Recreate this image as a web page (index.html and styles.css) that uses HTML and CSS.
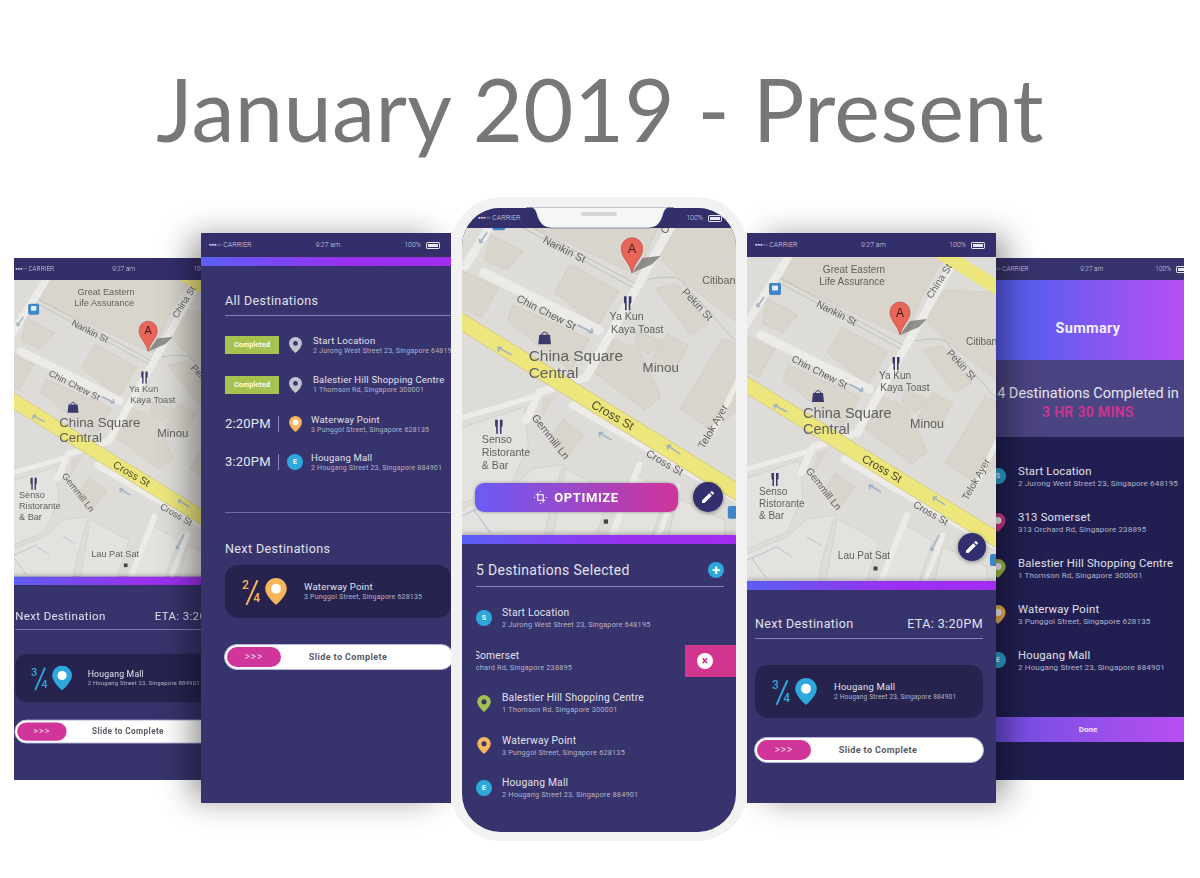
FILE: index.html
```html
<!DOCTYPE html>
<html lang="en">
<head>
  <meta charset="UTF-8">
  <meta name="viewport" content="width=device-width, initial-scale=1.0">
  <title>January 2019 - Present</title>
  <link rel="stylesheet" href="styles.css">
</head>
<body>
  <svg class="defs" width="0" height="0" aria-hidden="true">
    <defs>
      <symbol id="pin" viewBox="0 0 24 30">
        <path fill="currentColor" fill-rule="evenodd" d="M12 0a12 12 0 0 1 12 12c0 8-12 18-12 18S0 20 0 12A12 12 0 0 1 12 0zm0 7.5a4.5 4.5 0 1 0 0 9 4.5 4.5 0 0 0 0-9z"/>
      </symbol>
      <symbol id="pin-white" viewBox="0 0 24 30">
        <path fill="currentColor" d="M12 0a12 12 0 0 1 12 12c0 8-12 18-12 18S0 20 0 12A12 12 0 0 1 12 0z"/>
        <circle cx="12" cy="12" r="5.5" fill="#fff"/>
      </symbol>
      <symbol id="pencil" viewBox="0 0 24 24">
        <path fill="#fff" d="M3 17.2V21h3.800L17.800 10 14 6.200zM20.700 7a1 1 0 0 0 0-1.400l-2.300-2.300a1 1 0 0 0-1.400 0l-1.800 1.800L19 8.800z"/>
      </symbol>
      <g id="fork">
        <path d="M-2.500 0v5q0 1.500 1 2v6h1.500V0M2 0v13h1.500V7q1-.5 1-2V0" fill="#3a3968"/>
      </g>
      <g id="map-art">
        <rect x="-30" y="-10" width="320" height="350" fill="#dddcd9"/>
        <!-- lighter lots in the south -->
        <g fill="#e3e2df" stroke="#cbc9c5" stroke-width=".6">
          <polygon points="-20,228 52,204 56,240 40,275 -20,300"/>
          <polygon points="-20,305 40,280 60,262 88,258 76,300 70,330 -20,330"/>
          <polygon points="90,262 132,284 118,330 78,330"/>
          <polygon points="158,268 186,284 170,330 132,330 146,300"/>
          <polygon points="196,290 240,310 240,330 186,330"/>
        </g>
        <path d="M-20 312L30 290 45 300M4 300l16 22M60 280l14 8" fill="none" stroke="#b8c2d0" stroke-width="1"/>
        <!-- buildings -->
        <g fill="#d9d5cc" stroke="#cbc6bd" stroke-width=".5">
          <polygon points="45,1 197,1 177,36 158,80 35,23"/>
          <polygon points="20,41 51,58 36,75 15,66"/>
          <polygon points="-20,70 28,92 12,120 -20,105"/>
          <polygon points="95,70 141,95 121,128 80,96"/>
          <polygon points="41,108 113,140 95,170 36,123"/>
          <polygon points="135,140 160,150 172,175 180,195 165,207 115,170"/>
          <polygon points="158,133 183,143 168,155 155,145"/>
          <polygon points="186,135 206,146 191,173 171,160"/>
          <polygon points="238,140 270,150 270,193 228,226 198,206"/>
          <polygon points="175,93 195,88 225,126 208,136"/>
          <polygon points="185,33 280,36 280,146 201,86 181,66"/>
          <polygon points="88,216 108,230 91,253 75,236"/>
        </g>
        <!-- streets -->
        <g fill="none" stroke="#ecebe8" stroke-linecap="round">
          <path stroke-width="8" d="M212 -5L110 176"/>
          <path stroke-width="7" d="M110 176L66 190 54 216"/>
          <path stroke-width="8" d="M44 -4L-4 72"/>
          <path stroke-width="9" d="M14 78L122 132"/>
          <path stroke-width="8" d="M98 202L262 296"/>
          <path stroke-width="5" d="M-20 218L62 194"/>
          <path stroke-width="6" d="M160 258L132 330"/>
          <path stroke-width="5" d="M196 278L176 330"/>
          <path stroke-width="5" d="M230 226L254 176"/>
        </g>
        <polygon points="70,196 82,192 66,218" fill="#d9d5cc"/>
        <path d="M33 21L156 88M31 25L154 92M168 84Q190 80 198 84L250 142" fill="none" stroke="#b9b6ae" stroke-width=".7"/>
        <path d="M-10 122L262 290" fill="none" stroke="#d4d08c" stroke-width="16"/>
        <path d="M-10 122L262 290" fill="none" stroke="#ece67c" stroke-width="14"/>
        <path d="M188 -8L262 38" fill="none" stroke="#ece67c" stroke-width="14"/>
        <!-- one way arrows -->
        <g fill="none" stroke="#9fb2c4" stroke-width="1.500">
          <path d="M27 148L40 155M27 148l4 0M27 148l1 4"/>
          <path d="M186 240L198 248M186 240l4 0M186 240l1 4"/>
          <path d="M122 228L134 235M122 228l4 0M122 228l1 4"/>
          <path d="M102 127L116 134M116 134l-4 0M116 134l-1-4"/>
          <path d="M17 40L10 50M10 50l0-4M10 50l3-1"/>
          <path d="M192 278L184 294M184 294l0-4M184 294l3-2"/>
        </g>
        <!-- labels -->
        <g class="map-label">
          <text x="107" y="16" text-anchor="middle">Great Eastern</text>
          <text x="105" y="28" text-anchor="middle">Life Assurance</text>
          <text x="88" y="59" text-anchor="middle" transform="rotate(27 88 59)">Nankin St</text>
          <text x="71" y="118" text-anchor="middle" transform="rotate(27 71 118)">Chin Chew St</text>
          <text x="195" y="26" text-anchor="middle" transform="rotate(-58 195 26)">China St</text>
          <text x="219" y="88">Citibank</text>
          <text x="212" y="110" text-anchor="middle" transform="rotate(47 212 110)">Pekin St</text>
          <text x="148" y="122" text-anchor="middle">Ya Kun</text>
          <text x="158" y="134" text-anchor="middle">Kaya Toast</text>
          <text x="232" y="224" text-anchor="middle" transform="rotate(-60 232 224)">Telok Ayer</text>
          <text x="133" y="215" text-anchor="middle" transform="rotate(30 133 215)" class="map-road">Cross St</text>
          <text x="182" y="259" text-anchor="middle" transform="rotate(30 182 259)">Cross St</text>
          <text x="74" y="234" text-anchor="middle" transform="rotate(52 74 234)">Gemmill Ln</text>
          <text x="12" y="238">Senso</text>
          <text x="12" y="250">Ristorante</text>
          <text x="12" y="262">&amp; Bar</text>
          <text x="117" y="302" text-anchor="middle">Lau Pat Sat</text>
          <text x="56" y="161" class="map-big">China Square</text>
          <text x="56" y="177" class="map-big">Central</text>
          <text x="180" y="171" text-anchor="middle" class="map-mid">Minou</text>
        </g>
        <!-- poi icons -->
        <rect x="22" y="26" width="12" height="12" rx="2" fill="#3f86c6"/>
        <rect x="25" y="28.500" width="6" height="5" rx="1" fill="#e4ecf4"/>
        <rect x="243" y="297" width="12" height="12" rx="2" fill="#3f86c6"/>
        <rect x="126.500" y="309.500" width="4" height="4" fill="#444"/>
        <use href="#fork" x="148" y="100"/>
        <use href="#fork" x="27" y="216"/>
        <path d="M66 136h10l1 9H65z" fill="#3b3a6a"/>
        <path d="M68 136q3-5 6 0" fill="none" stroke="#3b3a6a"/>
        <!-- marker -->
        <polygon points="153,78 163,64 180,62 172,70" fill="#6b6b66" opacity=".7"/>
        <path d="M153 78c-2-10-10-14-10-23a10 10 0 1 1 20 0c0 9-8 13-10 23z" fill="#e8655a" stroke="#b5423a" stroke-width=".6"/>
        <text x="153" y="59.500" text-anchor="middle" class="map-marker">A</text>
      </g>
    </defs>
  </svg>

  <header class="title-wrap">
    <h1 class="title">January 2019 - Present</h1>
  </header>

  <main class="stage">
    <!-- far left, same screen as the right navigation one but smaller -->
    <section class="window window-left">
      <div class="shrunk">
        <div class="screen">
          <div class="status"><span class="carrier"><i class="dots">●●●○○</i> CARRIER</span><span>9:27 am</span><span class="batt">100% <i class="battery"></i></span></div>
          <svg class="map map-nav" viewBox="0 0 249 324"><use href="#map-art"/></svg>
          <div class="bar"></div>
          <div class="body body-nav">
            <div class="section-title"><span>Next Destination</span><span>ETA: 3:20PM</span></div>
            <div class="card">
              <div class="frac frac-blue"><b>3</b><b class="denom">4</b></div>
              <svg class="card-pin blue"><use href="#pin-white"/></svg>
              <div class="place"><div class="name">Hougang Mall</div><div class="addr">2 Hougang Street 23, Singapore 884901</div></div>
            </div>
            <div class="slider"><span class="thumb">&gt;&gt;&gt;</span><span class="slider-text">Slide to Complete</span></div>
          </div>
        </div>
      </div>
    </section>

    <section class="window window-list">
      <div class="screen">
        <div class="status"><span class="carrier"><i class="dots">●●●○○</i> CARRIER</span><span>9:27 am</span><span class="batt">100% <i class="battery"></i></span></div>
        <div class="bar"></div>
        <div class="body body-all">
          <div class="section-title">All Destinations</div>
          <div class="dest-row done">
            <span class="when"><span class="badge">Completed</span></span>
            <svg class="row-pin grey"><use href="#pin"/></svg>
            <div class="place"><div class="name">Start Location</div><div class="addr">2 Jurong West Street 23, Singapore 648195</div></div>
          </div>
          <div class="dest-row done">
            <span class="when"><span class="badge">Completed</span></span>
            <svg class="row-pin grey"><use href="#pin"/></svg>
            <div class="place"><div class="name">Balestier Hill Shopping Centre</div><div class="addr">1 Thomson Rd, Singapore 300001</div></div>
          </div>
          <div class="dest-row">
            <span class="when time">2:20PM</span>
            <svg class="row-pin orange"><use href="#pin-white"/></svg>
            <div class="place"><div class="name">Waterway Point</div><div class="addr">3 Punggol Street, Singapore 628135</div></div>
          </div>
          <div class="dest-row">
            <span class="when time">3:20PM</span>
            <span class="dot-letter">E</span>
            <div class="place"><div class="name">Hougang Mall</div><div class="addr">2 Hougang Street 23, Singapore 884901</div></div>
          </div>
          <div class="rule"></div>
          <div class="next-title">Next Destinations</div>
          <div class="card">
            <div class="frac frac-orange"><b>2</b><b class="denom">4</b></div>
            <svg class="card-pin orange"><use href="#pin-white"/></svg>
            <div class="place"><div class="name">Waterway Point</div><div class="addr">3 Punggol Street, Singapore 628135</div></div>
          </div>
          <div class="slider"><span class="thumb">&gt;&gt;&gt;</span><span class="slider-text">Slide to Complete</span></div>
        </div>
      </div>
    </section>

    <section class="window window-nav">
      <div class="screen">
        <div class="status"><span class="carrier"><i class="dots">●●●○○</i> CARRIER</span><span>9:27 am</span><span class="batt">100% <i class="battery"></i></span></div>
        <div class="map-wrap">
          <svg class="map map-nav" viewBox="0 0 249 324"><use href="#map-art"/></svg>
          <span class="fab fab-nav"><svg><use href="#pencil"/></svg></span>
        </div>
        <div class="bar"></div>
        <div class="body body-nav">
          <div class="section-title"><span>Next Destination</span><span>ETA: 3:20PM</span></div>
          <div class="card">
            <div class="frac frac-blue"><b>3</b><b class="denom">4</b></div>
            <svg class="card-pin blue"><use href="#pin-white"/></svg>
            <div class="place"><div class="name">Hougang Mall</div><div class="addr">2 Hougang Street 23, Singapore 884901</div></div>
          </div>
          <div class="slider"><span class="thumb">&gt;&gt;&gt;</span><span class="slider-text">Slide to Complete</span></div>
        </div>
      </div>
    </section>

    <section class="window window-summary">
      <div class="screen">
        <div class="status status-small"><span class="carrier"><i class="dots">●●●○○</i> CARRIER</span><span>9:27 am</span><span class="batt">100% <i class="battery"></i></span></div>
        <div class="summary-head">Summary</div>
        <div class="summary-stats">
          <div>4 Destinations Completed in</div>
          <div class="summary-time">3 HR 30 MINS</div>
        </div>
        <div class="summary-list">
          <div class="sum-row"><span class="dot-letter">S</span><div class="place"><div class="name">Start Location</div><div class="addr">2 Jurong West Street 23, Singapore 648195</div></div></div>
          <div class="sum-row"><svg class="row-pin pink"><use href="#pin-white"/></svg><div class="place"><div class="name">313 Somerset</div><div class="addr">313 Orchard Rd, Singapore 238895</div></div></div>
          <div class="sum-row"><svg class="row-pin green"><use href="#pin-white"/></svg><div class="place"><div class="name">Balestier Hill Shopping Centre</div><div class="addr">1 Thomson Rd, Singapore 300001</div></div></div>
          <div class="sum-row"><svg class="row-pin orange"><use href="#pin-white"/></svg><div class="place"><div class="name">Waterway Point</div><div class="addr">3 Punggol Street, Singapore 628135</div></div></div>
          <div class="sum-row"><span class="dot-letter">E</span><div class="place"><div class="name">Hougang Mall</div><div class="addr">2 Hougang Street 23, Singapore 884901</div></div></div>
        </div>
        <div class="done-btn">Done</div>
      </div>
    </section>

    <!-- centre phone with the bezel -->
    <section class="window window-device">
      <div class="device-screen">
        <div class="status status-device"><span class="carrier"><i class="dots">●●●○○</i> CARRIER</span><span class="batt">100% <i class="battery"></i></span></div>
        <div class="map-wrap map-wrap-device">
          <svg class="map map-device" viewBox="-6.600 36 257.300 288"><use href="#map-art"/></svg>
          <div class="map-actions">
            <span class="optimize">
              <svg class="crop" viewBox="0 0 24 24"><path d="M7 3v14h14M3 7h14v14" fill="none" stroke="#fff" stroke-width="2"/><path d="M12 0v2M22 12h2M0 12h2M12 22v2" stroke="#fff" stroke-width="2"/></svg>
              OPTIMIZE
            </span>
            <span class="fab"><svg><use href="#pencil"/></svg></span>
          </div>
        </div>
        <div class="bar"></div>
        <div class="body body-select">
          <div class="section-title"><span>5 Destinations Selected</span><span class="plus">+</span></div>
          <div class="sel-row"><span class="dot-letter">S</span><div class="place"><div class="name">Start Location</div><div class="addr">2 Jurong West Street 23, Singapore 648195</div></div></div>
          <div class="sel-row swiped">
            <div class="place place-swiped"><div class="name">313 Somerset</div><div class="addr">313 Orchard Rd, Singapore 238895</div></div>
            <span class="delete"><span class="delete-x">×</span></span>
          </div>
          <div class="sel-row"><svg class="row-pin green"><use href="#pin"/></svg><div class="place"><div class="name">Balestier Hill Shopping Centre</div><div class="addr">1 Thomson Rd, Singapore 300001</div></div></div>
          <div class="sel-row"><svg class="row-pin orange"><use href="#pin"/></svg><div class="place"><div class="name">Waterway Point</div><div class="addr">3 Punggol Street, Singapore 628135</div></div></div>
          <div class="sel-row"><span class="dot-letter">E</span><div class="place"><div class="name">Hougang Mall</div><div class="addr">2 Hougang Street 23, Singapore 884901</div></div></div>
        </div>
      </div>
      <svg class="notch" viewBox="0 0 148 22"><path d="M0 0C12 0 9 6 13 13C16 19 20 21 28 21H120C128 21 132 19 135 13C139 6 136 0 148 0Z" fill="#f6f6f6" stroke="#2f2c66" stroke-width=".5"/><rect x="55" y="5" width="36" height="4" rx="2" fill="#d6d6d6"/></svg>
    </section>
  </main>
</body>
</html>
```

FILE: styles.css
```css
* {
  box-sizing: border-box;
}

html, body {
  height: 100%;
}

body {
  margin: 0;
  background-color: #fff;
  font-family: Roboto, "Liberation Sans", sans-serif;
  overflow: hidden;
}

.defs {
  display: block;
  height: 0;
}

.title-wrap {
  height: 197px;
  display: flex;
  justify-content: center;
}

.title {
  margin: 56px 0 0;
  font-family: Lato, "Open Sans", sans-serif;
  font-weight: 400;
  font-size: 86.500px;
  line-height: 106px;
  color: #777;
  letter-spacing: 0.4px;
  white-space: nowrap;
}

/* the phones sit on a free canvas */
.stage {
  position: relative;
  height: 681px;
}

.window {
  position: absolute;
}

.window-left {
  left: 14px;
  top: 61px;
  width: 220px;
  height: 522px;
  overflow: hidden;
  z-index: 1;
}

.shrunk {
  width: 249px;
  height: 570px;
  margin-left: -6.5px;
  transform: scale(0.916);
  transform-origin: left top;
}

.window-list {
  left: 201px;
  top: 36px;
  width: 250px;
  height: 570px;
  z-index: 2;
  box-shadow: -14px 0 30px -4px rgba(0, 0, 0, 0.42);
}

.window-nav {
  left: 747px;
  top: 36px;
  width: 249px;
  height: 570px;
  z-index: 2;
  box-shadow: 14px 0 30px -4px rgba(0, 0, 0, 0.42);
}

.window-summary {
  left: 992px;
  top: 61px;
  width: 192px;
  height: 522px;
  z-index: 1;
}

.window-device {
  left: 451px;
  top: 0;
  width: 296px;
  height: 644px;
  padding: 11px 11px 9px;
  border-radius: 50px;
  background-color: #f2f2f2;
  z-index: 3;
}

.screen {
  height: 100%;
  display: flex;
  flex-direction: column;
  background-color: #37336c;
  overflow: hidden;
}

.device-screen {
  height: 100%;
  display: flex;
  flex-direction: column;
  background-color: #37336c;
  border-radius: 38px;
  overflow: hidden;
}

.notch {
  position: absolute;
  left: 75px;
  top: 10px;
  width: 148px;
  height: 22px;
}

/* status bar */
.status {
  height: 24px;
  flex: none;
  display: flex;
  justify-content: space-between;
  align-items: center;
  padding: 0 11px 0 8px;
  background-color: #332f6b;
  color: #d8d8e6;
  font-size: 7px;
  font-weight: 300;
}

.status-small {
  height: 22px;
  background-color: #37336c;
  padding: 0;
  font-size: 6.5px;
}

.status-small .carrier {
  margin-left: -4px;
}

.status-small .batt {
  margin-right: -6px;
}

.status-device {
  height: 20px;
  padding: 0 14px 0 16px;
}

.dots {
  font-style: normal;
  font-size: 4.5px;
  font-family: "DejaVu Sans", sans-serif;
  letter-spacing: -0.2px;
  vertical-align: 1px;
}

.batt {
  display: flex;
  align-items: center;
  gap: 5px;
}

.battery {
  display: block;
  width: 14px;
  height: 7px;
  border: 1px solid #e6e6f0;
  border-radius: 1.5px;
  background-color: #e6e6f0;
  box-shadow: inset 0 0 0 1px #332f6b;
}

/* map */
.map {
  display: block;
  flex: none;
  filter: blur(0.4px);
}

.map-nav {
  width: 249px;
  height: 324px;
}

.map-device {
  width: 274px;
  height: 307px;
}

.map-wrap {
  position: relative;
  flex: none;
}

.map-label {
  font-family: "Liberation Sans", sans-serif;
  font-size: 10px;
  fill: #5f5f5f;
}

.map-big {
  font-size: 14.500px;
}

.map-mid {
  font-size: 12.500px;
}

.map-road {
  font-size: 11.500px;
  fill: #4c4a22;
}

.map-marker {
  font-family: "Liberation Sans", sans-serif;
  font-size: 12px;
  fill: #3d1a18;
}

.bar {
  height: 9px;
  flex: none;
  background: linear-gradient(90deg, #5b5ff6, #9a30f0 60%, #a22df0);
  box-shadow: 0 -2px 4px rgba(60, 60, 60, 0.3);
  position: relative;
}

.fab {
  width: 30px;
  height: 30px;
  flex: none;
  border-radius: 50%;
  background-color: #332f6e;
  display: flex;
  align-items: center;
  justify-content: center;
  box-shadow: 0 1px 4px rgba(0, 0, 0, 0.4);
}

.fab svg {
  width: 16px;
  height: 16px;
}

.fab-nav {
  position: absolute;
  right: 10px;
  bottom: 20px;
  width: 28px;
  height: 28px;
}

.map-actions {
  position: absolute;
  left: 13px;
  right: 13px;
  bottom: 23px;
  display: flex;
  align-items: center;
  justify-content: space-between;
}

.optimize {
  width: 203px;
  height: 29px;
  border-radius: 9px;
  background: linear-gradient(90deg, #6a5cf6, #d0339a);
  color: #fff;
  font-size: 13px;
  font-weight: 700;
  letter-spacing: 0.6px;
  display: flex;
  align-items: center;
  justify-content: center;
  gap: 7px;
  box-shadow: 0 0 3px rgba(60, 60, 60, 0.5);
}

.crop {
  width: 13px;
  height: 13px;
}

/* shared text */
.section-title {
  display: flex;
  justify-content: space-between;
  align-items: center;
  line-height: 16px;
  padding-bottom: 6px;
  border-bottom: 1px solid #8684b4;
  color: #e2e2ee;
  font-size: 12.500px;
  letter-spacing: 0.4px;
}

.place {
  min-width: 0;
  white-space: nowrap;
}

.name {
  font-size: 9.500px;
  line-height: 11px;
  letter-spacing: 0.2px;
  color: #e2e2ec;
}

.addr {
  font-size: 6.500px;
  line-height: 9px;
  margin-top: 1px;
  letter-spacing: 0.2px;
  color: #b4b4c8;
}

/* phone body blocks */
.body {
  flex: 1;
  min-height: 0;
}

.body-nav {
  padding: 26px 13px 0 8px;
}

.body-nav .card {
  margin-top: 26px;
}

.body-nav .slider {
  margin-top: 19px;
}

.body-all {
  padding: 27px 0 0 24px;
  overflow: hidden;
}

.dest-row {
  height: 38px;
  display: flex;
  align-items: center;
  margin-right: -4px;
}

.section-title + .dest-row {
  margin-top: 10px;
}

.dest-row.done {
  margin-bottom: 1.5px;
}

.dest-row.done .place {
  margin-left: 2px;
}

.dest-row .addr,
.body-all .card .addr {
  font-size: 7px;
}

.when {
  width: 54px;
  flex: none;
}

.time {
  height: 16px;
  line-height: 16px;
  font-size: 13px;
  letter-spacing: 0.2px;
  color: #e6e6f0;
  border-right: 1px solid #8a88b6;
}

.badge {
  display: block;
  width: 54px;
  height: 18px;
  line-height: 18px;
  background-color: #a6c24f;
  color: #fff;
  font-size: 7px;
  font-weight: 700;
  text-align: center;
  letter-spacing: 0.2px;
}

.row-pin {
  width: 13px;
  height: 16px;
  flex: none;
}

.dest-row .row-pin {
  margin: 0 9px 0 10px;
}

.dest-row .dot-letter {
  margin: 0 8px;
}

.grey {
  color: #c3c3cf;
}

.orange {
  color: #f7b55c;
}

.blue {
  color: #2ea8dc;
}

.green {
  color: #a3c14e;
}

.pink {
  color: #d5378f;
}

.dot-letter {
  width: 16px;
  height: 16px;
  flex: none;
  border-radius: 50%;
  background-color: #2ea8dc;
  color: #fff;
  font-size: 7px;
  font-weight: 700;
  line-height: 16px;
  text-align: center;
}

.rule {
  height: 1px;
  margin-top: 31px;
  background-color: #6f6da0;
}

.next-title {
  margin-top: 28px;
  line-height: 16px;
  font-size: 12.500px;
  letter-spacing: 0.4px;
  color: #e2e2ee;
}

.body-all .card {
  margin-top: 8px;
}

.body-all .slider {
  margin-top: 26px;
  margin-right: -3px;
}

.card {
  height: 53px;
  display: flex;
  align-items: center;
  padding-left: 17px;
  background-color: #26244f;
  border-radius: 13px;
  overflow: hidden;
}

.frac {
  position: relative;
  width: 18px;
  height: 26px;
  flex: none;
  display: grid;
  grid-template-columns: 1fr 1fr;
  grid-template-rows: 1fr 1fr;
  font-size: 12px;
  line-height: 13px;
}

.frac b {
  font-weight: 500;
}

.frac .denom {
  grid-column: 2;
  grid-row: 2;
  text-align: right;
}

.frac::after {
  content: "";
  position: absolute;
  left: 8.500px;
  top: 0;
  width: 1.500px;
  height: 27px;
  background-color: currentColor;
  transform: rotate(24deg);
}

.frac-blue {
  color: #2ea8dc;
}

.frac-orange {
  color: #f7b55c;
}

.card-pin {
  width: 22px;
  height: 27px;
  flex: none;
  margin: 0 17px 0 5px;
}

.slider {
  height: 26px;
  padding: 2px;
  display: flex;
  align-items: center;
  background-color: #fff;
  border-radius: 13px;
  border: 1px solid #b9b7d8;
  margin-left: -1px;
  margin-right: -1px;
}

.thumb {
  width: 54px;
  height: 100%;
  flex: none;
  border-radius: 11px;
  background-color: #d0359a;
  color: #f0d5e8;
  font-size: 10px;
  line-height: 20px;
  text-align: center;
  letter-spacing: 1px;
}

.slider-text {
  flex: 1;
  padding-right: 36px;
  text-align: center;
  font-size: 9px;
  font-weight: 700;
  letter-spacing: 0.4px;
  color: #5a5a62;
}

/* centre phone list */
.body-select {
  padding: 18px 12px 0 14px;
  overflow: hidden;
}

.body-select .section-title {
  padding-bottom: 8px;
  font-size: 14px;
  letter-spacing: 0.3px;
}

.plus {
  width: 16px;
  height: 16px;
  border-radius: 50%;
  background-color: #2ea8dc;
  color: #fff;
  font-size: 15px;
  font-weight: 700;
  line-height: 16px;
  text-align: center;
  letter-spacing: 0;
}

.sel-row {
  height: 42.500px;
  display: flex;
  align-items: center;
  gap: 10px;
}

.section-title + .sel-row {
  margin-top: 10px;
}

.sel-row .name {
  font-size: 10.300px;
  line-height: 12px;
}

.sel-row .addr {
  font-size: 7.300px;
}

.sel-row .row-pin {
  width: 16px;
  height: 17px;
}

.swiped {
  position: relative;
  overflow: hidden;
  margin-right: -12px;
}

.place-swiped {
  margin-left: -23px;
}

.delete {
  position: absolute;
  right: 0;
  top: 5px;
  width: 51px;
  height: 32px;
  display: flex;
  align-items: center;
  padding-left: 12px;
  background-color: #d1358f;
}

.delete-x {
  width: 16px;
  height: 16px;
  border-radius: 50%;
  background-color: #fff;
  color: #c5307f;
  font-size: 12px;
  font-weight: 700;
  line-height: 16px;
  text-align: center;
}

/* summary phone */
.summary-head {
  height: 80px;
  flex: none;
  display: flex;
  align-items: center;
  justify-content: center;
  background: linear-gradient(90deg, #5c5df0 20%, #b84ff2 100%);
  color: #f2f0fc;
  font-size: 14.500px;
  font-weight: 700;
  letter-spacing: 0.3px;
  padding-top: 17px;
}

.summary-stats {
  height: 77px;
  flex: none;
  background-color: #4b4482;
  color: #e6e6f0;
  font-size: 14.500px;
  text-align: center;
  line-height: 19px;
  padding-top: 24px;
  white-space: nowrap;
}

.summary-time {
  color: #c9358f;
  font-weight: 700;
  font-size: 14px;
  letter-spacing: 0.3px;
}

.summary-list {
  flex: 1;
  min-height: 0;
  background-color: #211f52;
  padding-top: 16px;
}

.sum-row {
  height: 46px;
  display: flex;
  align-items: center;
  gap: 12px;
  margin-left: -2px;
}

.sum-row .name {
  font-size: 11.300px;
  line-height: 13px;
}

.sum-row .addr {
  font-size: 8px;
  letter-spacing: 0.15px;
}

.sum-row .row-pin {
  width: 16px;
  height: 19px;
}

.done-btn {
  height: 63px;
  flex: none;
  background: linear-gradient(#211f52, #211f52) bottom / 100% 38px no-repeat, linear-gradient(90deg, #6d4fe0, #b84ff2);
  color: #f0e6fa;
  font-size: 8px;
  font-weight: 700;
  line-height: 25px;
  text-align: center;
}
```
